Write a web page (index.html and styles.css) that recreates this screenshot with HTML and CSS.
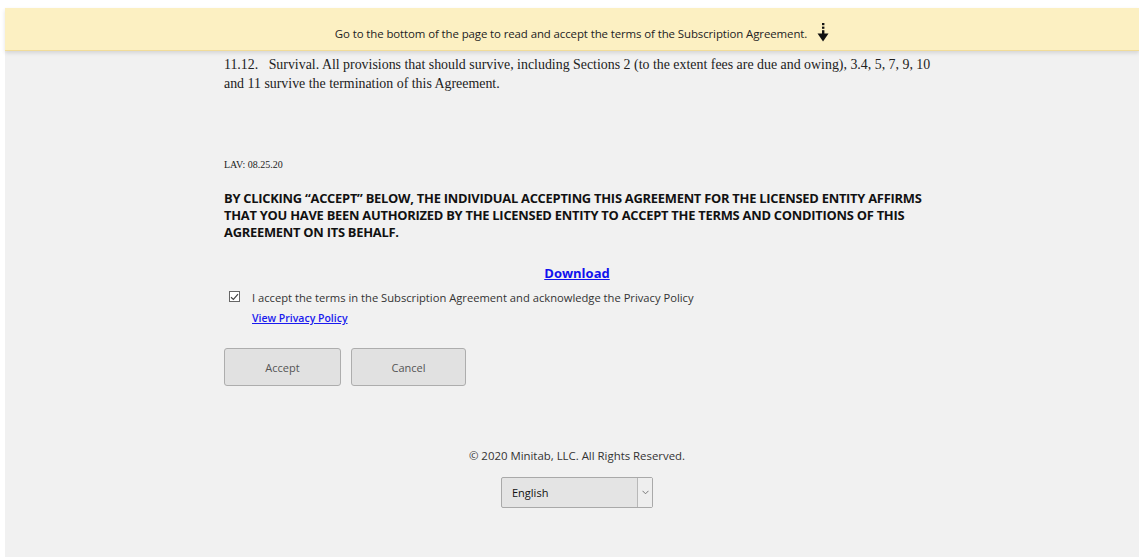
FILE: index.html
```html
<!DOCTYPE html>
<html lang="en">
<head>
<meta charset="utf-8">
<title>Subscription Agreement</title>
<link rel="stylesheet" href="styles.css">
</head>
<body>
<div class="page">
  <div class="notice">
    <span class="notice-text">Go to the bottom of the page to read and accept the terms of the Subscription Agreement.</span>
    <svg class="notice-arrow" width="12" height="19" viewBox="0 0 12 19" aria-hidden="true">
      <rect x="5" y="0" width="2.4" height="2.2" fill="#111"/>
      <rect x="5" y="3.6" width="2.4" height="2.2" fill="#111"/>
      <rect x="5" y="7.2" width="2.4" height="4" fill="#111"/>
      <path d="M0.5 10.5 H11.5 L6 18.5 Z" fill="#111"/>
    </svg>
  </div>

  <main class="content">
    <p class="clause">11.12.&nbsp;&nbsp; Survival. All provisions that should survive, including Sections 2 (to the extent fees are due and owing), 3.4, 5, 7, 9, 10 and 11 survive the termination of this Agreement.</p>

    <p class="version">LAV: 08.25.20</p>

    <p class="affirm">BY CLICKING “ACCEPT” BELOW, THE INDIVIDUAL ACCEPTING THIS AGREEMENT FOR THE LICENSED ENTITY AFFIRMS THAT YOU HAVE BEEN AUTHORIZED BY THE LICENSED ENTITY TO ACCEPT THE TERMS AND CONDITIONS OF THIS AGREEMENT ON ITS BEHALF.</p>

    <div class="download-row"><a class="download" href="#">Download</a></div>

    <div class="consent">
      <span class="checkbox" aria-hidden="true">
        <svg width="9" height="8" viewBox="0 0 9 8"><path d="M1 4.2 L3.4 6.4 L8 1.2" fill="none" stroke="#444" stroke-width="1.2"/></svg>
      </span>
      <div class="consent-text">
        <span class="consent-label">I accept the terms in the Subscription Agreement and acknowledge the Privacy Policy</span>
        <a class="privacy" href="#">View Privacy Policy</a>
      </div>
    </div>

    <div class="actions">
      <button class="btn" type="button">Accept</button>
      <button class="btn" type="button">Cancel</button>
    </div>

    <footer class="footer">
      <p class="copyright">© 2020 Minitab, LLC. All Rights Reserved.</p>
      <div class="lang-select">
        <span class="lang-value">English</span>
        <span class="lang-caret">
          <svg width="7" height="5" viewBox="0 0 7 5"><path d="M0.5 0.8 L3.5 3.8 L6.5 0.8" fill="none" stroke="#777" stroke-width="1"/></svg>
        </span>
      </div>
    </footer>
  </main>
</div>
</body>
</html>
```

FILE: styles.css
```css
html, body {
  margin: 0;
  padding: 0;
  background: #ffffff;
}

body {
  font-family: "Open Sans", "Noto Sans", sans-serif;
  color: #222;
}

.page {
  margin: 8px 0 0 5px;
  background: #f1f1f1;
  min-height: 549px;
}

.notice {
  height: 43px;
  background: #fcf0c2;
  border-bottom: 1px solid #f1dc9a;
  box-shadow: 0 2px 4px rgba(0, 0, 0, 0.12);
  display: flex;
  align-items: center;
  justify-content: center;
  gap: 10px;
  padding: 9px 0 0 20px;
  box-sizing: border-box;
}

.notice-text {
  font-size: 11.45px;
  color: #222;
  letter-spacing: -0.1px;
}

.notice-arrow {
  display: block;
  margin-top: -2px;
}

.content {
  width: 710px;
  margin-left: 219px;
  padding-top: 4px;
}

.clause {
  margin: 0;
  font-family: "Liberation Serif", "Times New Roman", serif;
  font-size: 13.9px;
  line-height: 19px;
  color: #222;
}

.version {
  margin: 65px 0 0 0;
  font-family: "Liberation Serif", "Times New Roman", serif;
  font-size: 10px;
  line-height: 14px;
  color: #222;
}

.affirm {
  margin: 18px 0 0 0;
  width: 702px;
  font-weight: 700;
  font-size: 12.9px;
  line-height: 17px;
  color: #111;
  letter-spacing: -0.25px;
}

.download-row {
  margin-top: 20px;
  text-align: center;
  width: 706px;
}

.download {
  font-weight: 700;
  font-size: 13px;
  line-height: 18px;
  color: #1111ee;
  text-decoration: underline;
}

.consent {
  margin-top: 5px;
  display: flex;
  align-items: flex-start;
  gap: 12px;
  padding-left: 5px;
}

.checkbox {
  width: 11px;
  height: 11px;
  border: 1px solid #666;
  box-sizing: border-box;
  background: #fff;
  display: flex;
  align-items: center;
  justify-content: center;
  margin-top: 3px;
}

.consent-text {
  display: flex;
  flex-direction: column;
  font-size: 11.2px;
  line-height: 19px;
  color: #333;
}

.privacy {
  margin-top: 3px;
  color: #1a1aee;
  text-decoration: underline;
  font-weight: 600;
  font-size: 10.5px;
  line-height: 16px;
  align-self: flex-start;
}

.actions {
  margin-top: 22px;
  display: flex;
  gap: 10px;
}

.btn {
  width: 117px;
  height: 38px;
  background: #e1e1e1;
  border: 1px solid #adadad;
  border-radius: 3px;
  font-family: "Open Sans", "Noto Sans", sans-serif;
  font-size: 11px;
  color: #555;
  padding: 0;
}

.btn + .btn {
  width: 115px;
}

.footer {
  width: 706px;
  margin-top: 62px;
  display: flex;
  flex-direction: column;
  align-items: center;
}

.copyright {
  margin: 0;
  font-size: 11.4px;
  line-height: 16px;
  color: #333;
}

.lang-select {
  margin-top: 13px;
  width: 152px;
  height: 31px;
  box-sizing: border-box;
  border: 1px solid #a9a9a9;
  border-radius: 2px;
  background: #e4e4e4;
  display: flex;
  align-items: stretch;
}

.lang-value {
  flex: 1;
  display: flex;
  align-items: center;
  padding-left: 10px;
  font-size: 11px;
  color: #111;
}

.lang-caret {
  width: 14px;
  border-left: 1px solid #b8b8b8;
  background: #eeeeee;
  display: flex;
  align-items: center;
  justify-content: center;
}
```
